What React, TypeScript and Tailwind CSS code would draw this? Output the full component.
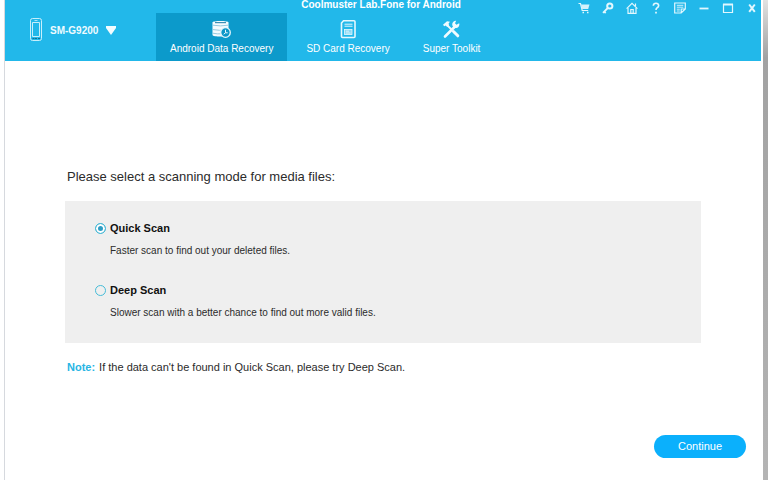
import { useState } from "react";
import type { ReactNode } from "react";
import clsx from "clsx";

const SCAN_MODES = [
  { id: "quick", name: "Quick Scan", description: "Faster scan to find out your deleted files." },
  { id: "deep", name: "Deep Scan", description: "Slower scan with a better chance to find out more valid files." },
];

function PhoneIcon() {
  return (
    <svg className="w-3 h-6" viewBox="0 0 12 24" fill="none" stroke="#c8effb">
      <rect x="0.5" y="0.5" width="11" height="22" rx="2" />
      <path d="M2.5 4.5h7v14h-7z" />
      <path d="M4.5 2.5h3" strokeWidth="0.8" />
      <path d="M2.5 20.5h2M5 20.5h2M8 20.5h2" stroke="#176f92" />
    </svg>
  );
}

function DatabaseIcon() {
  return (
    <svg className="w-[19px] h-[19px]" viewBox="0 0 19 19" fill="none">
      <path d="M0.5 2.5C0.5 0.5 16.5 0.5 16.5 2.5V15C16.5 17 0.5 17 0.5 15Z" fill="#f3fbfe" />
      <path d="M3 2.6h11" stroke="#3d8fb4" strokeWidth="1.2" />
      <path d="M1 5.2q7.5 1.4 15 0M1 9.6q6 1.4 15 0M1 13.2q4 1 9 0.6" stroke="#8ac4db" strokeWidth="0.9" />
      <circle cx="13.5" cy="12.5" r="4.8" fill="#0c97c8" stroke="#e6f7fd" strokeWidth="1.3" />
      <path d="M13.5 9.8v3l-1.8 1.4M13.5 12.8h2.2" stroke="#e6f7fd" />
    </svg>
  );
}

function SdCardIcon() {
  return (
    <svg className="w-[19px] h-[19px]" viewBox="0 0 19 19" fill="none" stroke="#e6f8fe">
      <path d="M4.5 0.8H15Q16 0.8 16 1.8V16.5Q16 17.5 15 17.5H3.5Q2.5 17.5 2.5 16.5V3Z" strokeWidth="1.6" />
      <path d="M5.5 4.2h8M5.5 6.2h8" />
      <rect x="5.5" y="9.5" width="7.5" height="5" fill="#8bd9f4" strokeWidth="0.8" />
      <path d="M7 11.2h3M7 13h4.5" strokeWidth="0.8" />
    </svg>
  );
}

function ToolkitIcon() {
  return (
    <svg className="w-[19px] h-[19px]" viewBox="0 0 19 19" fill="none" stroke="#f0fbff">
      <path d="M3 16.5 13 6.5" strokeWidth="2.6" strokeLinecap="round" />
      <path d="M17.2 3.2a3.6 3.6 0 1 1-3-2.4L13 3.2l1.5 1.6Z" fill="#f0fbff" stroke="none" />
      <path d="M1 4.8 5 1.2 8 1.8 6.6 3.4 7 5.2 5.2 7 3.6 5.6 2.2 6.2Z" fill="#f0fbff" stroke="none" />
      <path d="M5.5 5.5 10 10" strokeWidth="1.8" />
      <path d="M11.5 11.5 15.8 15.8" strokeWidth="3" strokeLinecap="round" />
    </svg>
  );
}

const WINDOW_BUTTONS: { label: string; icon: ReactNode }[] = [
  {
    label: "Buy",
    icon: (
      <>
        <path d="M0.5 1.5h2l1.7 7h6" />
        <path d="M3 2.5h8.5l-1.3 4.5h-6z" fill="#d5f2fb" stroke="none" />
        <path d="M4.5 10.5h1.5M9 10.5h1.5" strokeWidth="1.4" />
      </>
    ),
  },
  {
    label: "Register",
    icon: (
      <>
        <circle cx="7.8" cy="4" r="2.6" strokeWidth="2" />
        <path d="M5.8 6 1 10.8M2.2 9.6l1.5 1.4" strokeWidth="1.8" />
      </>
    ),
  },
  {
    label: "Home",
    icon: (
      <>
        <path d="M0.6 6.6 6 1.3l5.4 5.3M9.5 1.5v2.5" />
        <path d="M2 6v5.3h8V6" />
        <path d="M4.8 11V7.5h2.4V11" />
      </>
    ),
  },
  {
    label: "Help",
    icon: (
      <>
        <path d="M3.3 3.7Q3.5 1.2 6 1.2T8.7 3.6Q8.7 5 7.2 5.8Q6 6.5 6 8" strokeWidth="1.6" />
        <path d="M6 9.7v1.8" strokeWidth="1.7" />
      </>
    ),
  },
  {
    label: "Feedback",
    icon: (
      <>
        <path d="M11.3 5.5V1H0.7v10h6.5L11.3 7V5.5M7.2 11V7h4" />
        <path d="M2.8 3.3h6.5M2.8 5.2h6.5M2.8 7.2h3M2.8 9h3" strokeWidth="0.9" />
      </>
    ),
  },
  { label: "Minimize", icon: <path d="M1.5 6.5h9" strokeWidth="1.8" /> },
  {
    label: "Maximize",
    icon: (
      <>
        <path d="M1.5 2.5h9v8h-9z" />
        <path d="M1 2.5h10" strokeWidth="2" />
      </>
    ),
  },
  { label: "Close", icon: <path d="M3.2 2.5 8.8 9.8M8.8 2.5 3.2 9.8" strokeWidth="2" /> },
];

const TABS = [
  { name: "Android Data Recovery", icon: <DatabaseIcon /> },
  { name: "SD Card Recovery", icon: <SdCardIcon /> },
  { name: "Super Toolkit", icon: <ToolkitIcon /> },
];

export default function App() {
  const [activeTab, setActiveTab] = useState("Android Data Recovery");
  const [mode, setMode] = useState("quick");

  return (
    <div className="min-h-screen flex bg-white pl-1 text-[#2b2b2b] font-['Liberation_Sans',Arial,sans-serif]">
      <div className="flex-1 flex flex-col border-l border-[#d6d9de]">
        <header className="bg-[#22b8ea] text-white">
          {/* Title bar */}
          <div className="h-[13px] grid grid-cols-[1fr_auto_1fr] items-start">
            <h1 className="col-start-2 pr-1 text-[10px] leading-[10px] font-bold">Coolmuster Lab.Fone for Android</h1>
            <div className="flex justify-end gap-3 pt-[2px] pr-[3px]">
              {WINDOW_BUTTONS.map(({ label, icon }) => (
                <button key={label} type="button" aria-label={label}>
                  <svg className="block w-3 h-3" viewBox="0 0 12 12" fill="none" stroke="#e2f7fe" strokeWidth="1.2">
                    {icon}
                  </svg>
                </button>
              ))}
            </div>
          </div>

          {/* Device picker and tabs */}
          <div className="flex h-12">
            <div className="w-[151px] pl-[25px] pt-[5px]">
              <button type="button" className="flex items-center gap-2 text-[10px] font-bold text-[#effbff]">
                <PhoneIcon />
                SM-G9200
                <svg className="w-[10px] h-[9px]" viewBox="0 0 10 9" fill="#f2fcff">
                  <path d="M0 0h10v2L5 9 0 2z" />
                </svg>
              </button>
            </div>
            <nav className="flex gap-[5px]">
              {TABS.map(({ name, icon }) => (
                <button
                  key={name}
                  type="button"
                  onClick={() => setActiveTab(name)}
                  className={clsx(
                    "flex flex-col items-center px-[14px] pt-[7px] text-[10px] leading-[12px] gap-1",
                    activeTab === name && "bg-[#0c9acb]"
                  )}
                >
                  {icon}
                  {name}
                </button>
              ))}
            </nav>
          </div>
        </header>

        <main className="flex-1 flex flex-col pt-[108px] pb-[22px]">
          <form className="flex-1 flex flex-col" onSubmit={(e) => e.preventDefault()}>
            <fieldset className="px-[60px]">
              <legend className="pl-[2px] text-[13px] leading-4">Please select a scanning mode for media files:</legend>
              <div className="mt-4 bg-[#efefef] pl-[30px] pt-5 pb-[22px] flex flex-col gap-6">
                {SCAN_MODES.map(({ id, name, description }) => (
                  <div key={id}>
                    <label className="flex items-center gap-1 text-[11px] leading-[14px] font-bold text-[#111]">
                      <input
                        type="radio"
                        name="mode"
                        checked={mode === id}
                        onChange={() => setMode(id)}
                        className="appearance-none w-[11px] h-[11px] rounded-full border border-[#45bcd8] checked:bg-[#2f9dc4] checked:shadow-[inset_0_0_0_2px_#fff]"
                      />
                      {name}
                    </label>
                    <p className="mt-2 pl-[15px] text-[10px] leading-4">{description}</p>
                  </div>
                ))}
              </div>
            </fieldset>
            <p className="mt-4 px-[62px] flex gap-1 text-[11px] leading-4">
              <strong className="text-[#27b5e4]">Note:</strong>
              <span>If the data can't be found in Quick Scan, please try Deep Scan.</span>
            </p>
            <button
              type="submit"
              className="mt-auto mr-[15px] self-end w-[92px] h-[23px] rounded-full bg-[#0bb0fc] text-white text-[11px]"
            >
              Continue
            </button>
          </form>
        </main>
      </div>
      <div className="w-[7px] pl-[2px]">
        <div className="h-full bg-linear-to-b from-[#e2e2e2] from-0% via-[#a2a2a2] via-12% to-[#b4b4b4]" />
      </div>
    </div>
  );
}
